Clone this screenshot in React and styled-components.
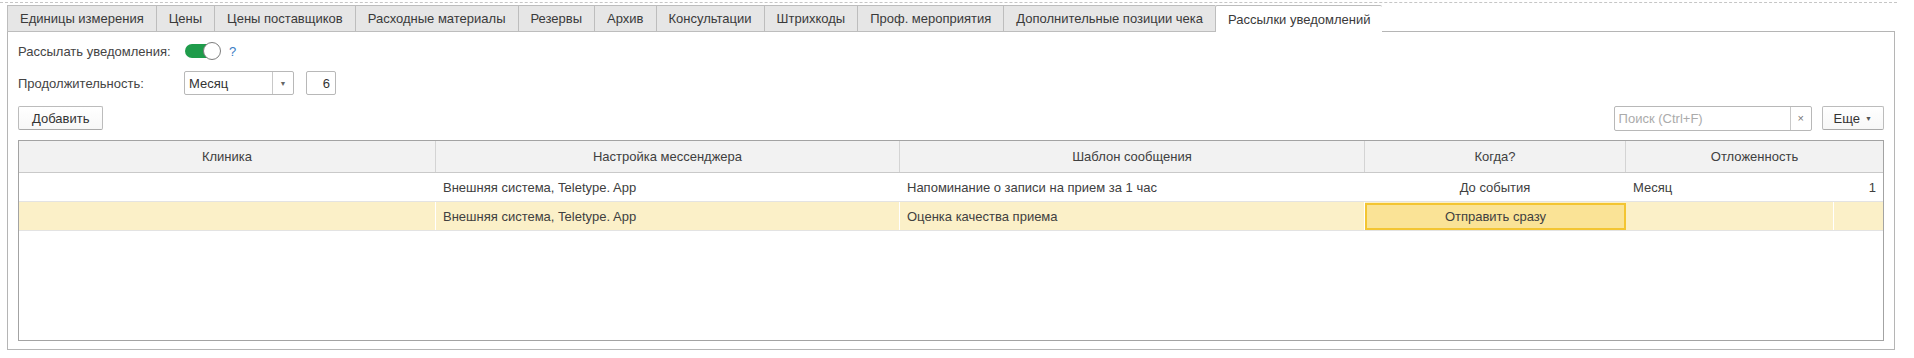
import React from "react";
import styled, { createGlobalStyle } from "styled-components";

const GlobalStyle = createGlobalStyle`
  html, body {
    margin: 0;
    background: #fff;
  }
  body {
    font-family: "Liberation Sans", Arial, sans-serif;
    font-size: 13px;
    color: #444;
  }
`;

const Page = styled.div`
  width: 1897px;
  padding-top: 2px;
`;

const TopRule = styled.div`
  border-top: 1px dashed #c6c6c6;
`;

const TabStrip = styled.div`
  display: flex;
  margin: 2px 0 0 7px;
  width: 1888px;
  height: 27px;
`;

const Tab = styled.div`
  display: flex;
  align-items: center;
  padding: 0 12px;
  white-space: nowrap;
  color: #3a3a3a;
  border: 1px solid #bdbdbd;
  border-right: none;
  border-bottom: ${(p) => (p.$active ? "none" : "1px solid #bdbdbd")};
  background: ${(p) => (p.$active ? "#fff" : "#e6e6e6")};
  border-radius: ${(p) => (p.$active ? "2px 2px 0 0" : "0")};

  &:last-of-type {
    border-right: 1px solid #bdbdbd;
  }
`;

const TabRest = styled.div`
  flex: 1;
  border-bottom: 1px solid #b5b5b5;
`;

const Panel = styled.div`
  margin-left: 7px;
  width: 1888px;
  box-sizing: border-box;
  border: 1px solid #b5b5b5;
  border-top: none;
  padding: 7px 10px 8px 10px;
  display: flex;
  flex-direction: column;
`;

const Form = styled.div`
  display: grid;
  grid-template-columns: 166px auto;
  grid-auto-rows: 24px;
  row-gap: 8px;
  align-items: center;
`;

const Label = styled.div`
  color: #444;
`;

const Inline = styled.div`
  display: flex;
  align-items: center;
  gap: ${(p) => p.$gap || 0}px;
`;

const Toggle = styled.div`
  position: relative;
  width: 35px;
  height: 14px;
  margin-left: 1px;
  border-radius: 7px;
  background: #1f9c4b;
`;

const Knob = styled.div`
  position: absolute;
  right: -1px;
  top: -2px;
  width: 16px;
  height: 16px;
  border-radius: 50%;
  background: #fff;
  border: 1px solid #7d7d7d;
`;

const Help = styled.span`
  color: #3a7cc4;
  margin-left: 9px;
`;

const Select = styled.div`
  display: flex;
  width: 110px;
  height: 24px;
  box-sizing: border-box;
  border: 1px solid #b8b8b8;
  border-radius: 2px;
`;

const SelectValue = styled.div`
  flex: 1;
  display: flex;
  align-items: center;
  padding-left: 4px;
  color: #333;
`;

const SelectArrow = styled.div`
  width: 20px;
  border-left: 1px solid #c8c8c8;
  display: flex;
  align-items: center;
  justify-content: center;
  color: #666;
  font-size: 7px;
`;

const NumberBox = styled.div`
  width: 30px;
  height: 24px;
  box-sizing: border-box;
  border: 1px solid #b8b8b8;
  border-radius: 2px;
  display: flex;
  align-items: center;
  justify-content: flex-end;
  padding-right: 5px;
  color: #333;
`;

const Toolbar = styled.div`
  display: flex;
  justify-content: space-between;
  align-items: center;
  height: 24px;
  margin-top: 11px;
`;

const Button = styled.button`
  height: 24px;
  box-sizing: border-box;
  padding: 0 ${(p) => p.$pad || 10}px;
  font: inherit;
  color: #333;
  background: linear-gradient(#fff, #f7f7f7);
  border: 1px solid #bcbcbc;
  border-bottom-color: #a9a9a9;
  border-radius: 2px;
  display: flex;
  align-items: center;
  gap: 5px;
`;

const Search = styled.div`
  display: flex;
  width: 198px;
  height: 25px;
  box-sizing: border-box;
  border: 1px solid #b8b8b8;
  border-radius: 2px;
`;

const SearchInput = styled.div`
  flex: 1;
  display: flex;
  align-items: center;
  padding-left: 4px;
  color: #ababab;
`;

const SearchClear = styled.div`
  width: 20px;
  border-left: 1px solid #c8c8c8;
  display: flex;
  align-items: center;
  justify-content: center;
  color: #777;
  font-size: 11px;
`;

const Caret = styled.span`
  font-size: 7px;
  color: #555;
`;

const cols = "417px 464px 465px 261px 208px 1fr";

const Table = styled.div`
  margin-top: 10px;
  height: 201px;
  box-sizing: border-box;
  border: 1px solid #a3a3a3;
`;

const HeadRow = styled.div`
  display: grid;
  grid-template-columns: ${cols};
  height: 31px;
  background: #f2f2f2;
  border-bottom: 1px solid #c9c9c9;
`;

const HeadCell = styled.div`
  grid-column: span ${(p) => p.$span || 1};
  display: flex;
  align-items: center;
  justify-content: center;
  color: #404040;
  border-right: 1px solid #d4d4d4;

  &:last-child {
    border-right: none;
  }
`;

const Row = styled.div`
  display: grid;
  grid-template-columns: ${cols};
  height: 29px;
  box-sizing: border-box;
  border-bottom: 1px solid #e3e3e3;
  background: ${(p) => (p.$current ? "#fbf0c8" : "#fff")};
`;

const Cell = styled.div`
  display: flex;
  align-items: center;
  padding: 0 7px;
  min-width: 0;
  white-space: nowrap;
  color: #404040;
  border-right: 1px solid #fff;
  justify-content: ${(p) =>
    p.$align === "center" ? "center" : p.$align === "right" ? "flex-end" : "flex-start"};

  &:last-child {
    border-right: none;
  }
`;

const FocusCell = styled(Cell)`
  background: #fae396;
  border: 2px solid #f3c532;
  margin-top: 1px;
`;

const tabs = [
  "Единицы измерения",
  "Цены",
  "Цены поставщиков",
  "Расходные материалы",
  "Резервы",
  "Архив",
  "Консультации",
  "Штрихкоды",
  "Проф. мероприятия",
  "Дополнительные позиции чека",
  "Рассылки уведомлений",
];

export default function App() {
  return (
    <Page>
      <GlobalStyle />
      <TopRule />
      <TabStrip>
        {tabs.map((t) => (
          <Tab key={t} $active={t === "Рассылки уведомлений"}>
            {t}
          </Tab>
        ))}
        <TabRest />
      </TabStrip>
      <Panel>
        <Form>
          <Label>Рассылать уведомления:</Label>
          <Inline>
            <Toggle>
              <Knob />
            </Toggle>
            <Help>?</Help>
          </Inline>
          <Label>Продолжительность:</Label>
          <Inline $gap={12}>
            <Select>
              <SelectValue>Месяц</SelectValue>
              <SelectArrow>▼</SelectArrow>
            </Select>
            <NumberBox>6</NumberBox>
          </Inline>
        </Form>
        <Toolbar>
          <Button $pad={13}>Добавить</Button>
          <Inline $gap={10}>
            <Search>
              <SearchInput>Поиск (Ctrl+F)</SearchInput>
              <SearchClear>×</SearchClear>
            </Search>
            <Button $pad={11}>
              Еще <Caret>▼</Caret>
            </Button>
          </Inline>
        </Toolbar>
        <Table>
          <HeadRow>
            <HeadCell>Клиника</HeadCell>
            <HeadCell>Настройка мессенджера</HeadCell>
            <HeadCell>Шаблон сообщения</HeadCell>
            <HeadCell>Когда?</HeadCell>
            <HeadCell $span={2}>Отложенность</HeadCell>
          </HeadRow>
          <Row>
            <Cell />
            <Cell>Внешняя система, Teletype. App</Cell>
            <Cell>Напоминание о записи на прием за 1 час</Cell>
            <Cell $align="center">До события</Cell>
            <Cell>Месяц</Cell>
            <Cell $align="right">1</Cell>
          </Row>
          <Row $current>
            <Cell />
            <Cell>Внешняя система, Teletype. App</Cell>
            <Cell>Оценка качества приема</Cell>
            <FocusCell $align="center">Отправить сразу</FocusCell>
            <Cell />
            <Cell />
          </Row>
        </Table>
      </Panel>
    </Page>
  );
}
